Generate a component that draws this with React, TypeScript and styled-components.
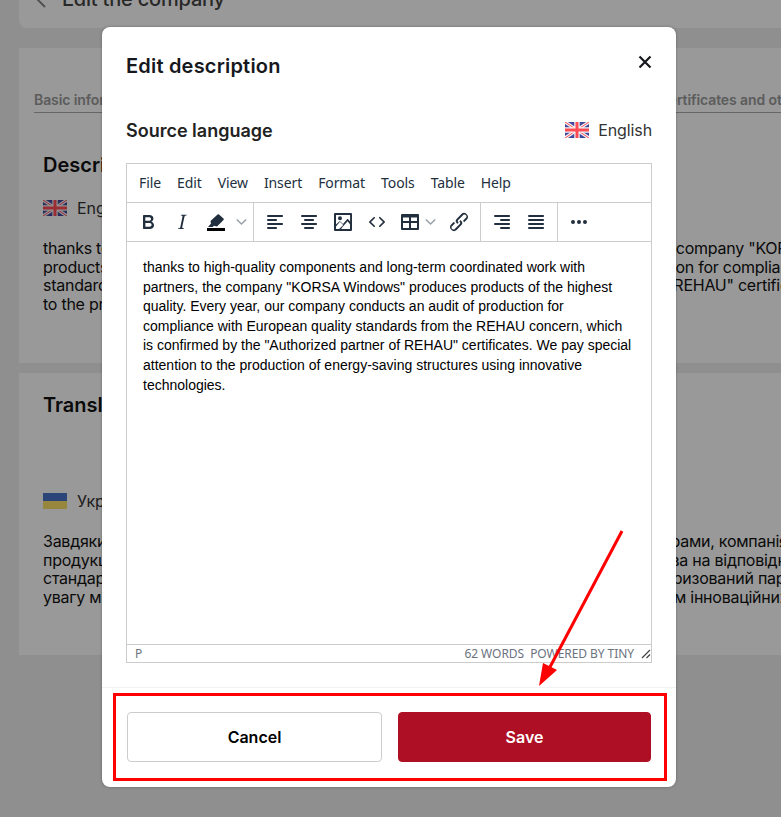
import React from "react";
import styled, { createGlobalStyle } from "styled-components";

const GlobalStyle = createGlobalStyle`
  html, body {
    margin: 0;
    padding: 0;
    background: #f0f0f0;
  }
  * { box-sizing: border-box; }
`;

const Page = styled.div`
  width: 781px;
  height: 817px;
  overflow: hidden;
  position: relative;
  background: #efefef;
  font-family: Inter, "Liberation Sans", sans-serif;
  color: #111;
`;

const Content = styled.div`
  width: 1100px;
  padding-left: 19px;
  display: flex;
  flex-direction: column;
`;

const TopBar = styled.div`
  height: 28px;
  background: #fff;
  border-radius: 0 0 8px 8px;
  margin-bottom: 20px;
  padding: 0 0 0 16px;
  display: flex;
  align-items: flex-end;
  gap: 15px;
  overflow: hidden;
`;

const BackIcon = styled.svg`
  width: 12px;
  height: 18px;
  margin-bottom: 20px;
  flex-shrink: 0;
`;

const TopTitle = styled.h1`
  margin: 0 0 14px;
  font-size: 20px;
  line-height: 30px;
  font-weight: 500;
  letter-spacing: -0.2px;
  color: #444;
  white-space: nowrap;
`;

const Card = styled.section<{ $height: number }>`
  height: ${(p) => p.$height}px;
  background: #fff;
  margin-bottom: 10px;
  padding: 0 24px;
`;

const Tabs = styled.div`
  margin: 0 -9px;
  padding-top: 44px;
  display: flex;
  gap: 508px;
  height: 65px;
`;

const Tab = styled.div`
  font-size: 14px;
  line-height: 16px;
  font-weight: 600;
  letter-spacing: -0.1px;
  color: #999;
  height: 21px;
  border-bottom: 1px solid #aaa;
  white-space: nowrap;
`;

const CardTitle = styled.h2<{ $top: number }>`
  margin: ${(p) => p.$top}px 0 0;
  font-size: 20px;
  line-height: 26px;
  font-weight: 600;
  color: #111;
`;

const LangRow = styled.div<{ $top: number }>`
  margin-top: ${(p) => p.$top}px;
  display: flex;
  align-items: center;
  gap: 10px;
  font-size: 16px;
  line-height: 20px;
  color: #333;
`;

const Paragraph = styled.p`
  margin: 21px 0 0;
  font-size: 16px;
  line-height: 18.5px;
  letter-spacing: -0.25px;
  white-space: pre;
  color: #111;
`;

const Overlay = styled.div`
  position: absolute;
  inset: 0;
  background: rgba(0, 0, 0, 0.4);
  padding: 27px 105px 0 102px;
`;

const Modal = styled.div`
  width: 574px;
  height: 760px;
  background: #fff;
  border-radius: 8px;
  display: flex;
  flex-direction: column;
  box-shadow: 0 0 3px rgba(0, 0, 0, 0.3);
`;

const ModalHeader = styled.div`
  height: 76px;
  padding: 25px 24px 0;
  display: flex;
  justify-content: space-between;
`;

const ModalTitle = styled.h2`
  margin: 0;
  font-size: 20px;
  line-height: 28px;
  font-weight: 600;
  letter-spacing: 0.2px;
  color: #16181d;
`;

const CloseButton = styled.button`
  width: 24px;
  height: 24px;
  margin: -2px -5px 0 0;
  padding: 0;
  border: 0;
  background: none;
  display: flex;
  align-items: center;
  justify-content: center;
  color: #16181d;
`;

const ModalBody = styled.div`
  flex: 1;
  padding: 0 24px;
  display: flex;
  flex-direction: column;
`;

const SourceRow = styled.div`
  height: 60px;
  padding-top: 16px;
  display: flex;
  justify-content: space-between;
`;

const SourceTitle = styled.h3`
  margin: 0;
  font-size: 18px;
  line-height: 24px;
  font-weight: 600;
  color: #222;
`;

const SourceLang = styled.div`
  display: flex;
  align-items: center;
  height: 22px;
  gap: 9px;
  font-size: 16px;
  letter-spacing: -0.1px;
  color: #333;
`;

const Editor = styled.div`
  width: 526px;
  height: 500px;
  border: 1px solid #ccc;
  display: flex;
  flex-direction: column;
`;

const MenuBar = styled.div`
  height: 39px;
  padding: 0 4px;
  display: flex;
  align-items: center;
  border-bottom: 1px solid #ccc;
`;

const MenuItem = styled.span`
  padding: 0 8px;
  font-family: "Noto Sans", sans-serif;
  font-size: 14px;
  line-height: 20px;
  letter-spacing: -0.1px;
  color: #222f3e;
`;

const ToolBar = styled.div`
  height: 39px;
  display: flex;
  border-bottom: 1px solid #ccc;
`;

const ToolGroup = styled.div`
  padding: 0 4px;
  display: flex;
  align-items: center;
  border-right: 1px solid #ccc;
  &:last-child {
    border-right: 0;
  }
`;

const ToolButton = styled.div<{ $width?: number; $start?: boolean }>`
  width: ${(p) => p.$width || 34}px;
  height: 38px;
  display: flex;
  align-items: center;
  justify-content: ${(p) => (p.$start ? "flex-start" : "center")};
  color: #222f3e;
  svg {
    fill: currentColor;
    display: block;
  }
`;

const Chevron = styled.svg`
  width: 11px;
  height: 10px;
  fill: none !important;
  stroke: #9aa1a9;
  stroke-width: 1.6;
`;

const EditArea = styled.div`
  flex: 1;
  padding: 16px 16px 0;
  font-family: "Liberation Sans", Arial, sans-serif;
  font-size: 14px;
  line-height: 19.6px;
  color: #000;
`;

const StatusBar = styled.div`
  height: 18px;
  padding: 0 0 0 8px;
  border-top: 1px solid #ccc;
  display: flex;
  align-items: center;
  justify-content: space-between;
  font-family: "Noto Sans", sans-serif;
  font-size: 12px;
  color: #6b7280;
`;

const StatusRight = styled.div`
  display: flex;
  align-items: center;
  gap: 7px;
  letter-spacing: -0.06px;
`;

const Footer = styled.div`
  height: 100px;
  padding: 24px 25px 0;
  border-top: 1px solid #f2f2f2;
  display: flex;
  gap: 16px;
`;

const FooterButton = styled.button<{ $primary?: boolean; $width: number }>`
  width: ${(p) => p.$width}px;
  height: 50px;
  border-radius: 4px;
  border: 1px solid ${(p) => (p.$primary ? "#af0f24" : "#ccc")};
  background: ${(p) => (p.$primary ? "#af0f24" : "#fff")};
  color: ${(p) => (p.$primary ? "#fff" : "#000")};
  font-family: Inter, "Liberation Sans", sans-serif;
  font-size: 16px;
  font-weight: 600;
`;

const Highlight = styled.div`
  position: absolute;
  left: 113px;
  top: 693px;
  width: 554px;
  height: 88px;
  border: 3px solid #ff0000;
  pointer-events: none;
`;

const Arrow = styled.svg`
  position: absolute;
  left: 530px;
  top: 525px;
  width: 100px;
  height: 170px;
  pointer-events: none;
`;

const UkFlag = () => (
  <svg width="24" height="16" viewBox="0 0 24 16">
    <rect width="24" height="16" fill="#41479b" />
    <path d="M0 0L24 16M24 0L0 16" stroke="#f5f5f5" strokeWidth="3.2" />
    <path d="M0 0L24 16M24 0L0 16" stroke="#ff4b55" strokeWidth="1" />
    <path d="M12 0V16M0 8H24" stroke="#f5f5f5" strokeWidth="5.4" />
    <path d="M12 0V16M0 8H24" stroke="#ff4b55" strokeWidth="3" />
  </svg>
);

const UaFlag = () => (
  <svg width="24" height="16" viewBox="0 0 24 16">
    <rect width="24" height="8" fill="#4973c9" />
    <rect y="8" width="24" height="8" fill="#fbe068" />
  </svg>
);

const icon = (d: string) => (
  <svg width="24" height="24" viewBox="0 0 24 24">
    <path d={d} fillRule="evenodd" />
  </svg>
);

const ICONS = {
  bold: "M7.8 19c-.3 0-.5 0-.6-.2l-.2-.5V5.7c0-.2 0-.4.2-.5l.6-.2h5c1.5 0 2.7.3 3.5 1 .7.6 1.1 1.4 1.1 2.5a3 3 0 0 1-.6 1.9c-.4.6-1 1-1.6 1.2.4.1.9.3 1.3.6s.8.7 1 1.2c.4.4.5 1 .5 1.6 0 1.3-.4 2.3-1.3 3-.8.7-2.1 1-3.8 1H7.8zm5-8.3c.6 0 1.2-.1 1.6-.5.4-.3.6-.7.6-1.3 0-1.1-.8-1.7-2.3-1.7H9.3v3.5h3.4zm.5 6c.7 0 1.3-.1 1.7-.4.4-.4.6-.9.6-1.5s-.2-1-.7-1.4c-.4-.3-1-.4-2-.4H9.4v3.8h4z",
  italic: "M16.7 4.7l-.1.9h-.3c-.6 0-1 0-1.4.3-.3.3-.4.6-.5 1.1l-2.1 9.8v.6c0 .5.4.8 1.4.8h.2l-.2.8H8l.2-.8h.2c1.1 0 1.8-.5 2-1.5l2-9.8.1-.5c0-.6-.4-.8-1.4-.8h-.3l.2-.9h5.8z",
  left: "M5 5h14c.6 0 1 .4 1 1s-.4 1-1 1H5a1 1 0 1 1 0-2zm0 4h8c.6 0 1 .4 1 1s-.4 1-1 1H5a1 1 0 1 1 0-2zm0 8h8c.6 0 1 .4 1 1s-.4 1-1 1H5a1 1 0 0 1 0-2zm0-4h14c.6 0 1 .4 1 1s-.4 1-1 1H5a1 1 0 0 1 0-2z",
  center: "M5 5h14c.6 0 1 .4 1 1s-.4 1-1 1H5a1 1 0 1 1 0-2zm3 4h8c.6 0 1 .4 1 1s-.4 1-1 1H8a1 1 0 1 1 0-2zm0 8h8c.6 0 1 .4 1 1s-.4 1-1 1H8a1 1 0 0 1 0-2zm-3-4h14c.6 0 1 .4 1 1s-.4 1-1 1H5a1 1 0 0 1 0-2z",
  right: "M5 5h14c.6 0 1 .4 1 1s-.4 1-1 1H5a1 1 0 1 1 0-2zm6 4h8c.6 0 1 .4 1 1s-.4 1-1 1h-8a1 1 0 0 1 0-2zm0 8h8c.6 0 1 .4 1 1s-.4 1-1 1h-8a1 1 0 0 1 0-2zm-6-4h14c.6 0 1 .4 1 1s-.4 1-1 1H5a1 1 0 0 1 0-2z",
  justify: "M5 5h14c.6 0 1 .4 1 1s-.4 1-1 1H5a1 1 0 1 1 0-2zm0 4h14c.6 0 1 .4 1 1s-.4 1-1 1H5a1 1 0 1 1 0-2zm0 4h14c.6 0 1 .4 1 1s-.4 1-1 1H5a1 1 0 0 1 0-2zm0 4h14c.6 0 1 .4 1 1s-.4 1-1 1H5a1 1 0 0 1 0-2z",
  image: "M4 3h16a1 1 0 0 1 1 1v16a1 1 0 0 1-1 1H4a1 1 0 0 1-1-1V4a1 1 0 0 1 1-1zm1 2v9.6l3.3-3.1c.3-.3.7-.3 1 0l2.7 2.6 4.1-4.9c.3-.4.8-.4 1 0l2 2.4V5H5zm0 14h3.1l4.2-3.9-3.4-3.3L5 16.4V19zm5.8 0H19v-4.7l-2.4-3-6.4 7.1.6.6zM9 6.2a2 2 0 1 1 0 4 2 2 0 0 1 0-4z",
  code: "M9.8 15.7c.3.3.3.8 0 1-.3.4-.9.4-1.2 0l-4.4-4.1a.8.8 0 0 1 0-1.2l4.4-4.2c.3-.3.9-.3 1.2 0 .3.3.3.8 0 1.1L6 12l3.8 3.7zm4.4 0c-.3.3-.3.8 0 1 .3.4.9.4 1.2 0l4.4-4.1c.3-.3.3-.9 0-1.2l-4.4-4.2a.8.8 0 0 0-1.2 0c-.3.3-.3.8 0 1.1L18 12l-3.8 3.7z",
  table: "M4 4h16a1 1 0 0 1 1 1v14a1 1 0 0 1-1 1H4a1 1 0 0 1-1-1V5a1 1 0 0 1 1-1zM5 7.5V11h6V7.5H5zm8 0V11h6V7.5h-6zM5 13v5h6v-5H5zm8 0v5h6v-5h-6z",
  link: "M6.2 12.3a1 1 0 0 1 1.4 1.4l-2 2a2 2 0 1 0 2.6 2.8l4.8-4.8a1 1 0 0 0 0-1.4 1 1 0 1 1 1.4-1.3 2.9 2.9 0 0 1 0 4L9.6 20a3.9 3.9 0 0 1-5.5-5.5l2-2zm11.6-.6a1 1 0 0 1-1.4-1.4l2-2a2 2 0 1 0-2.6-2.8L11 10.3a1 1 0 0 0 0 1.4A1 1 0 1 1 9.6 13a2.9 2.9 0 0 1 0-4L14.4 4a3.9 3.9 0 0 1 5.5 5.5l-2 2z",
  more: "M6 10a2 2 0 1 1 0 4 2 2 0 0 1 0-4zm6 0a2 2 0 1 1 0 4 2 2 0 0 1 0-4zm6 0a2 2 0 1 1 0 4 2 2 0 0 1 0-4z",
};

const MarkerIcon = () => (
  <svg width="24" height="24" viewBox="0 0 24 24">
    <path d="M15 4.5l4.5 4a1 1 0 0 1 0 1.4L13.5 16a1.5 1.5 0 0 1-1.6.3L10 15.7 8.5 17H4l3-3.5-.4-1.5a1.5 1.5 0 0 1 .4-1.4l6.6-6a1 1 0 0 1 1.4-.1z" />
    <rect x="3" y="18" width="18" height="3" fill="#000" />
  </svg>
);

const EN_LINES = `thanks to high-quality components and long-term coordinated work with partners, the company "KORSA Windows" produces
products of the highest quality. Every year, our company conducts an audit of production for compliance with European
standards from the REHAU concern, which is confirmed by the "Authorized partner of REHAU" certificates. We pay special
to the production of energy-saving structures using innovative technologies.`;

const UA_LINES = `Завдяки високоякісним компонентам та тривалій скоординованій роботі з партнерами, компанія "KORSA Windows" виробляє
продукцію найвищої якості. Щорічно наша компанія проводить аудит її виробництва на відповідність
стандартам якості від концерну REHAU, що підтверджується сертифікатами "Авторизований партнер REHAU"
увагу ми приділяємо виробництву енергозберігаючих конструкцій з застосуванням інноваційних технологій.`;

const MENU = ["File", "Edit", "View", "Insert", "Format", "Tools", "Table", "Help"];

const chevron = (
  <Chevron viewBox="0 0 11 10">
    <path d="M0.8 2.5L5.5 7L10.2 2.5" />
  </Chevron>
);

export default function App() {
  return (
    <Page>
      <GlobalStyle />
      <Content>
        <TopBar>
          <BackIcon viewBox="0 0 12 18">
            <path d="M10 1L2 9L10 17" fill="none" stroke="#888" strokeWidth="2" />
          </BackIcon>
          <TopTitle>Edit the company</TopTitle>
        </TopBar>
        <Card $height={315}>
          <Tabs>
            <Tab>Basic information</Tab>
            <Tab>Certificates and other documents</Tab>
          </Tabs>
          <CardTitle $top={39}>Description</CardTitle>
          <LangRow $top={20}>
            <UkFlag />
            English
          </LangRow>
          <Paragraph>{EN_LINES}</Paragraph>
        </Card>
        <Card $height={282}>
          <CardTitle $top={19}>Translation</CardTitle>
          <LangRow $top={73}>
            <UaFlag />
            Українська
          </LangRow>
          <Paragraph>{UA_LINES}</Paragraph>
        </Card>
      </Content>
      <Overlay>
        <Modal>
          <ModalHeader>
            <ModalTitle>Edit description</ModalTitle>
            <CloseButton aria-label="Close">
              <svg width="14" height="14" viewBox="0 0 14 14">
                <path d="M1.5 1.5L12.5 12.5M12.5 1.5L1.5 12.5" stroke="currentColor" strokeWidth="2.2" />
              </svg>
            </CloseButton>
          </ModalHeader>
          <ModalBody>
            <SourceRow>
              <SourceTitle>Source language</SourceTitle>
              <SourceLang>
                <UkFlag />
                English
              </SourceLang>
            </SourceRow>
            <Editor>
              <MenuBar>
                {MENU.map((m) => (
                  <MenuItem key={m}>{m}</MenuItem>
                ))}
              </MenuBar>
              <ToolBar>
                <ToolGroup>
                  <ToolButton>{icon(ICONS.bold)}</ToolButton>
                  <ToolButton>{icon(ICONS.italic)}</ToolButton>
                  <ToolButton>
                    <MarkerIcon />
                  </ToolButton>
                  <ToolButton $width={16}>{chevron}</ToolButton>
                </ToolGroup>
                <ToolGroup>
                  <ToolButton>{icon(ICONS.left)}</ToolButton>
                  <ToolButton>{icon(ICONS.center)}</ToolButton>
                  <ToolButton>{icon(ICONS.image)}</ToolButton>
                  <ToolButton>{icon(ICONS.code)}</ToolButton>
                  <ToolButton $width={31}>{icon(ICONS.table)}</ToolButton>
                  <ToolButton $width={17} $start>
                    {chevron}
                  </ToolButton>
                  <ToolButton>{icon(ICONS.link)}</ToolButton>
                </ToolGroup>
                <ToolGroup>
                  <ToolButton>{icon(ICONS.right)}</ToolButton>
                  <ToolButton>{icon(ICONS.justify)}</ToolButton>
                </ToolGroup>
                <ToolGroup>
                  <ToolButton>{icon(ICONS.more)}</ToolButton>
                </ToolGroup>
              </ToolBar>
              <EditArea>
                thanks to high-quality components and long-term coordinated work with partners, the company "KORSA
                Windows" produces products of the highest quality. Every year, our company conducts an audit of
                production for compliance with European quality standards from the REHAU concern, which is confirmed by
                the "Authorized partner of REHAU" certificates. We pay special attention to the production of
                energy-saving structures using innovative technologies.
              </EditArea>
              <StatusBar>
                <span>P</span>
                <StatusRight>
                  <span>62 WORDS&nbsp; POWERED BY TINY</span>
                  <svg width="10" height="10" viewBox="0 0 10 10">
                    <path d="M1 9L9 1M5.5 9L9 5.5" stroke="#444" strokeWidth="1.2" fill="none" />
                  </svg>
                </StatusRight>
              </StatusBar>
            </Editor>
          </ModalBody>
          <Footer>
            <FooterButton $width={255}>Cancel</FooterButton>
            <FooterButton $primary $width={253}>
              Save
            </FooterButton>
          </Footer>
        </Modal>
      </Overlay>
      <Highlight />
      <Arrow viewBox="0 0 100 170">
        <path d="M92 6L20 142" stroke="#ff0000" strokeWidth="3" fill="none" />
        <path d="M9 161L13 138L27 145Z" fill="#ff0000" />
      </Arrow>
    </Page>
  );
}
